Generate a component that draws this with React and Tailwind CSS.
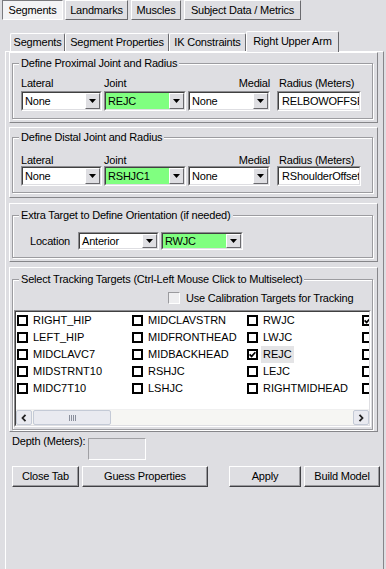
import React from "react";

const columns = [
  [["RIGHT_HIP"], ["LEFT_HIP"], ["MIDCLAVC7"], ["MIDSTRNT10"], ["MIDC7T10"]],
  [["MIDCLAVSTRN"], ["MIDFRONTHEAD"], ["MIDBACKHEAD"], ["RSHJC"], ["LSHJC"]],
  [["RWJC"], ["LWJC"], ["REJC", true, true], ["LEJC"], ["RIGHTMIDHEAD"]],
  [["", true], [""], [""], [""], [""]],
];

function Check({ on }) {
  return (
    <span className="w-[11px] h-[11px] shrink-0 border-2 border-black bg-white flex items-center justify-center">
      {on && (
        <svg width="7" height="7" viewBox="0 0 7 7">
          <path d="M0.6 3.4 L2.6 5.4 L6.4 1.2" stroke="black" strokeWidth="1.7" fill="none" />
        </svg>
      )}
    </span>
  );
}

function DropBtn() {
  return (
    <div className="w-[15px] h-full shrink-0 bg-[#dedee2] border border-t-white border-l-white border-b-[#6a6a6e] border-r-[#6a6a6e] flex items-center justify-center">
      <svg width="7" height="4" viewBox="0 0 7 4">
        <path d="M0 0 H7 L3.5 4 Z" fill="black" />
      </svg>
    </div>
  );
}

function Combo({ className, value, green }) {
  return (
    <div className={`flex ${className} border border-t-[#8c8c90] border-l-[#8c8c90] border-b-white border-r-white`}>
      <div
        className={`flex flex-1 items-center border border-t-[#404040] border-l-[#404040] border-b-[#dedee2] border-r-[#dedee2] ${
          green ? "bg-[#80ff80]" : "bg-white"
        }`}
      >
        <span className="flex-1 pl-[2px] overflow-hidden whitespace-nowrap">{value}</span>
        <DropBtn />
      </div>
    </div>
  );
}

function TextBox({ className, value }) {
  return (
    <div className={`flex ${className} border border-t-[#8c8c90] border-l-[#8c8c90] border-b-white border-r-white`}>
      <div className="flex flex-1 items-center bg-white border border-t-[#404040] border-l-[#404040] border-b-[#dedee2] border-r-[#dedee2] overflow-hidden">
        <span className="pl-[3px] whitespace-nowrap">{value}</span>
      </div>
    </div>
  );
}

function Group({ title, outer, children }) {
  return (
    <div className={`flex flex-col w-[369px] border border-t-white border-l-white border-b-[#86868a] border-r-[#86868a] pl-[2px] pr-[4px] ${outer}`}>
      <div className="relative flex-1 border border-[#9c9ca0] shadow-[inset_1px_1px_0_#fff,1px_1px_0_#fff]">
        <span className="absolute -top-[6px] left-[6px] px-[2px] bg-[#dedee2] whitespace-nowrap">{title}</span>
        {children}
      </div>
    </div>
  );
}

function JointRow({ joint, radius, labelPad, comboGap }) {
  return (
    <div className={`flex flex-col pl-[8px] ${labelPad}`}>
      <div className={`flex h-[11px] ${comboGap}`}>
        <span className="w-[83px]">Lateral</span>
        <span className="w-[84px]">Joint</span>
        <span className="w-[82px] text-right">Medial</span>
        <span className="ml-[9px]">Radius (Meters)</span>
      </div>
      <div className="flex h-[20px]">
        <Combo className="w-[81px]" value="None" />
        <Combo className="w-[82px] ml-[2px]" value={joint} green />
        <Combo className="w-[82px] ml-[2px]" value="None" />
        <TextBox className="w-[84px] ml-[7px]" value={radius} />
      </div>
    </div>
  );
}

function Button({ className, children }) {
  return (
    <div className={`flex items-center justify-center h-[21px] bg-[#dedee2] border border-t-white border-l-white border-b-[#404044] border-r-[#404044] shadow-[inset_-1px_-1px_0_#9a9a9e] ${className}`}>
      {children}
    </div>
  );
}

function ScrollBtn({ dir }) {
  return (
    <div className="w-[16px] h-[15px] shrink-0 rounded-[2px] border border-[#c4cad6] bg-[#e9eaf0] flex items-center justify-center">
      <svg width="6" height="8" viewBox="0 0 6 8">
        <path d={dir === "l" ? "M4.5 0.8 L1.5 4 L4.5 7.2" : "M1.5 0.8 L4.5 4 L1.5 7.2"} stroke="#222" strokeWidth="1.8" fill="none" />
      </svg>
    </div>
  );
}

export default function App() {
  return (
    <div className="w-[386px] h-[569px] overflow-hidden bg-[#dedee2] text-black text-[11px] leading-none tracking-[-0.2px] font-['Liberation_Sans',Arial,sans-serif] flex flex-col">
      {/* outer tabs */}
      <div className="flex h-[21px] shrink-0 pl-[2px]">
        <div className="w-[61px] h-[20px] flex items-center justify-center bg-[#f3f3f5] border border-t-[#7a7a7e] border-l-[#7a7a7e] border-b-white border-r-white">Segments</div>
        <div className="w-[63px] h-[20px] ml-[2px] flex items-center justify-center border border-t-white border-l-white border-b-[#6a6a6e] border-r-[#6a6a6e]">Landmarks</div>
        <div className="w-[50px] h-[20px] ml-[3px] flex items-center justify-center border border-t-white border-l-white border-b-[#6a6a6e] border-r-[#6a6a6e]">Muscles</div>
        <div className="w-[117px] h-[20px] ml-[3px] flex items-center justify-center border border-t-white border-l-white border-b-[#6a6a6e] border-r-[#6a6a6e]">Subject Data / Metrics</div>
      </div>

      {/* inner tabs */}
      <div className="flex items-end h-[21px] mt-[9px] shrink-0 pl-[10px]">
        <div className="w-[55px] h-[18px] flex items-center justify-center rounded-t-[2px] border-t border-l border-r border-t-white border-l-white border-r-[#6a6a6e]">Segments</div>
        <div className="w-[104px] h-[18px] flex items-center justify-center rounded-t-[2px] border-t border-l border-r border-t-white border-l-white border-r-[#6a6a6e]">Segment Properties</div>
        <div className="w-[77px] h-[18px] flex items-center justify-center rounded-t-[2px] border-t border-l border-r border-t-white border-l-white border-r-[#6a6a6e]">IK Constraints</div>
        <div className="relative z-10 w-[93px] h-[21px] -mb-[1px] pb-[2px] flex items-center justify-center rounded-t-[2px] bg-[#e2e2e6] border-t border-l border-r border-t-white border-l-white border-r-[#6a6a6e]">Right Upper Arm</div>
      </div>

      {/* tab page */}
      <div className="flex-1 ml-[5px] w-[379px] flex flex-col border-t border-l border-r border-t-white border-l-white border-r-[#86868a] pl-[3px]">
        <Group title="Define Proximal Joint and Radius" outer="h-[71px] pt-[10px] pb-[3px]">
          <JointRow joint="REJC" radius="RELBOWOFFSET" labelPad="pt-[14px]" comboGap="mb-[2px]" />
        </Group>

        <Group title="Define Distal Joint and Radius" outer="h-[71px] mt-[4px] pt-[9px] pb-[4px]">
          <JointRow joint="RSHJC1" radius="RShoulderOffset" labelPad="pt-[17px]" comboGap="mb-[0px]" />
        </Group>

        <Group title="Extra Target to Define Orientation (if needed)" outer="h-[59px] mt-[5px] pt-[11px] pb-[3px]">
          <div className="flex items-center pl-[17px] pt-[16px]">
            <span className="w-[48px]">Location</span>
            <Combo className="w-[81px] h-[18px]" value="Anterior" />
            <Combo className="w-[82px] h-[18px] ml-[2px]" value="RWJC" green />
          </div>
        </Group>

        <Group title="Select Tracking Targets (Ctrl-Left Mouse Click to Multiselect)" outer="h-[165px] mt-[5px] pt-[11px] pb-[1px]">
          <div className="flex items-center ml-[155px] mt-[12px] h-[12px]">
            <span className="w-[12px] h-[12px] border border-t-[#9a9a9e] border-l-[#9a9a9e] border-b-white border-r-white bg-[#eeeef0]" />
            <span className="ml-[6px]">Use Calibration Targets for Tracking</span>
          </div>
          <div className="ml-[1px] mt-[6px] w-[357px] h-[117px] flex flex-col border border-t-[#8c8c90] border-l-[#8c8c90] border-b-white border-r-white">
            <div className="flex-1 flex flex-col bg-white border border-t-[#404040] border-l-[#404040] border-b-[#dedee2] border-r-[#dedee2] overflow-hidden">
              <div className="flex-1 flex pl-[1px] tracking-normal">
                {columns.map((col, ci) => (
                  <div key={ci} className="w-[115px] shrink-0 flex flex-col">
                    {col.map(([name, on, sel], ri) => (
                      <div key={ri} className="h-[17px] flex items-center">
                        <Check on={on} />
                        {name && (
                          <span className={`ml-[3px] px-[2px] py-[3px] whitespace-nowrap ${sel ? "bg-[#e4e4e6]" : ""}`}>{name}</span>
                        )}
                      </div>
                    ))}
                  </div>
                ))}
              </div>
              <div className="h-[16px] flex items-center bg-[#f6f6f3] border-t border-t-[#f0f0f0]">
                <ScrollBtn dir="l" />
                <div className="w-[78px] h-[15px] ml-[1px] rounded-[2px] border border-[#c4cad6] bg-[#e9eaf0] flex items-center justify-center">
                  <div className="flex gap-[1px]">
                    <span className="w-[1px] h-[6px] bg-[#8a8f9c]" />
                    <span className="w-[1px] h-[6px] bg-[#8a8f9c]" />
                    <span className="w-[1px] h-[6px] bg-[#8a8f9c]" />
                    <span className="w-[1px] h-[6px] bg-[#8a8f9c]" />
                  </div>
                </div>
                <div className="flex-1" />
                <ScrollBtn dir="r" />
              </div>
            </div>
          </div>
        </Group>

        <div className="flex items-start mt-[6px] ml-[3px] h-[22px]">
          <span className="w-[76px] -mt-[2px]">Depth (Meters):</span>
          <div className="w-[58px] h-[22px] border border-t-[#a0a0a4] border-l-[#a0a0a4] border-b-white border-r-white" />
        </div>

        <div className="flex mt-[6px] ml-[3px]">
          <Button className="w-[67px]">Close Tab</Button>
          <Button className="w-[126px] ml-[3px]">Guess Properties</Button>
          <Button className="w-[72px] ml-[21px]">Apply</Button>
          <Button className="w-[76px] ml-[3px]">Build Model</Button>
        </div>
      </div>
    </div>
  );
}
